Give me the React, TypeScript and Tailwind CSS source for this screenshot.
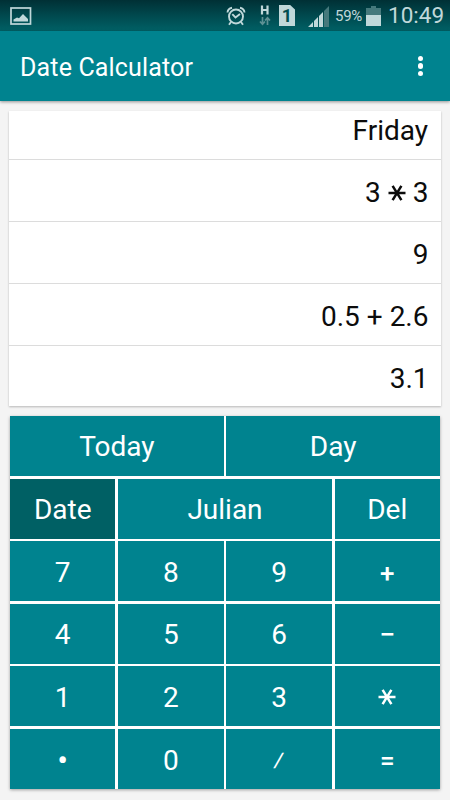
import type { ReactNode } from "react";
import clsx from "clsx";

interface Key {
  id: string;
  label: ReactNode;
  span?: string;
  active?: boolean;
}

function Star({ className }: { className?: string }) {
  return (
    <svg viewBox="0 0 18 16" className={clsx("h-4 w-[18px]", className)} fill="none" stroke="currentColor" strokeWidth="2.5">
      <path d="M.5 8h17M4.6.8l8.8 14.4M13.4.8L4.6 15.2" />
    </svg>
  );
}

const entries: { id: string; content: ReactNode }[] = [
  { id: "mul", content: <>3<Star className="mr-[7px] ml-[7px]" />3</> },
  { id: "nine", content: "9" },
  { id: "add", content: "0.5 + 2.6" },
  { id: "sum", content: "3.1" },
];

const keys: Key[] = [
  { id: "today", label: "Today", span: "col-span-2" },
  { id: "day", label: "Day", span: "col-span-2" },
  { id: "date", label: "Date", active: true },
  { id: "julian", label: "Julian", span: "col-span-2" },
  { id: "del", label: "Del" },
  { id: "7", label: "7" },
  { id: "8", label: "8" },
  { id: "9", label: "9" },
  { id: "plus", label: <span className="text-[26px] font-medium">+</span> },
  { id: "4", label: "4" },
  { id: "5", label: "5" },
  { id: "6", label: "6" },
  { id: "minus", label: <span className="font-medium">−</span> },
  { id: "1", label: "1" },
  { id: "2", label: "2" },
  { id: "3", label: "3" },
  { id: "times", label: <Star className="-mt-px" /> },
  { id: "dot", label: <span className="-mt-px text-[32px]">•</span> },
  { id: "0", label: "0" },
  { id: "divide", label: <span className="-mt-px -skew-x-12 text-[20px] font-medium">/</span> },
  { id: "equals", label: <span className="text-[26px] font-medium">=</span> },
];

function StatusBar() {
  return (
    <div className="flex h-[31px] items-center bg-linear-to-b from-[#003035] via-[#00494e] to-[#006166] text-[#c0d8da]">
      <svg viewBox="0 0 22 18" className="ml-[10px] h-[18px] w-[22px]">
        <rect x="1" y="1" width="19.5" height="16" fill="none" stroke="currentColor" strokeWidth="1.7" />
        <path d="M3.5 14.5v-2l3.5-2 2 .8 4-4.3 5 5v2.5z" fill="currentColor" />
      </svg>

      {/* alarm clock */}
      <svg viewBox="0 0 20 20" className="ml-[194px] h-5 w-5" fill="none" stroke="currentColor" strokeWidth="1.9">
        <circle cx="10" cy="10.5" r="7" />
        <path d="M6.3 8.2l3.2 3.2L14 8M5 16l-2 2.8M15 16l2 2.8M1.5 6.5C1.7 4 3.5 2.2 6 1.7M18.5 6.5C18.3 4 16.5 2.2 14 1.7" />
      </svg>

      {/* HSPA data indicator */}
      <svg viewBox="0 0 12 21" className="ml-[13px] h-[21px] w-3">
        <path d="M3 .5v9M8.5.5v9M3 5h6" stroke="currentColor" strokeWidth="2.2" fill="none" />
        <path d="M3.5 12v7M1 16.5l2.5 2.7L6 16.5M8.500 20v-7M6 15.500l2.500-2.700 2.500 2.700" stroke="#5d9194" strokeWidth="1.7" fill="none" />
      </svg>

      <div className="ml-[8px] flex h-[21px] w-4 items-center justify-center bg-current [clip-path:polygon(0_0,70%_0,100%_22%,100%_100%,0_100%)]">
        <span className="text-[18px] leading-none font-bold text-[#004d51]">1</span>
      </div>

      {/* signal strength */}
      <svg viewBox="0 0 21 21" className="mt-px ml-[13px] h-[21px] w-[21px]">
        <path d="M16 5l5-5v21h-5z" fill="#45797c" />
        <path d="M0 21l5-5v5zM6 15l4-4v10H6zM11 10l4-4v15h-4z" fill="currentColor" />
      </svg>

      <span className="mt-px ml-[6px] w-[27px] text-[15px] tracking-[-0.3px] whitespace-nowrap">59%</span>

      <svg viewBox="0 0 15 20" className="ml-[4px] h-5 w-[15px]">
        <path d="M0 2h5V0h5v2h5v8H0z" fill="#45797c" />
        <path d="M0 9h15v11H0z" fill="currentColor" />
      </svg>

      <span className="ml-[7px] text-[22.5px] whitespace-nowrap">10:49</span>
    </div>
  );
}

export default function App() {
  return (
    <div className="flex h-[800px] w-[450px] flex-col overflow-hidden bg-[#f4f4f4] font-['Roboto',sans-serif]">
      <StatusBar />

      <header className="flex h-[70px] items-center justify-between bg-[#00838f] pr-[27px] pl-5 text-white shadow-[0_1px_3px_rgba(0,0,0,0.4)]">
        <h1 className="pt-[3px] text-[25px] tracking-[0.15px] whitespace-nowrap">Date Calculator</h1>
        <button className="flex flex-col gap-[2px]" aria-label="More options">
          <span className="size-[5.5px] rounded-full bg-white" />
          <span className="size-[5.5px] rounded-full bg-white" />
          <span className="size-[5.5px] rounded-full bg-white" />
        </button>
      </header>

      {/* History */}
      <div className="mx-[9px] mt-[10px] h-[295px] bg-white text-[28px] text-[#0c0c0c] shadow-[0_1px_2px_rgba(0,0,0,0.25)]">
        <div className="flex h-[48px] items-center justify-end pr-[13px] pb-[8px]">Friday</div>
        {entries.map((entry) => (
          <div key={entry.id} className="flex h-[62px] items-center justify-end border-t border-[#dcdcdc] pt-[4px] pr-[12.5px]">
            {entry.content}
          </div>
        ))}
      </div>

      {/* Keypad */}
      <div className="mx-[10px] mt-[10px] grid h-[373px] shrink-0 grid-cols-4 grid-rows-6 gap-[2.7px] bg-white shadow-[0_1px_3px_rgba(0,0,0,0.35)]">
        {keys.map((key) => (
          <button
            key={key.id}
            className={clsx(
              "flex items-center justify-center pt-[3px] text-[28px] leading-none text-white",
              key.span,
              key.active ? "bg-[#006064]" : "bg-[#00838f]",
            )}
          >
            {key.label}
          </button>
        ))}
      </div>
    </div>
  );
}
